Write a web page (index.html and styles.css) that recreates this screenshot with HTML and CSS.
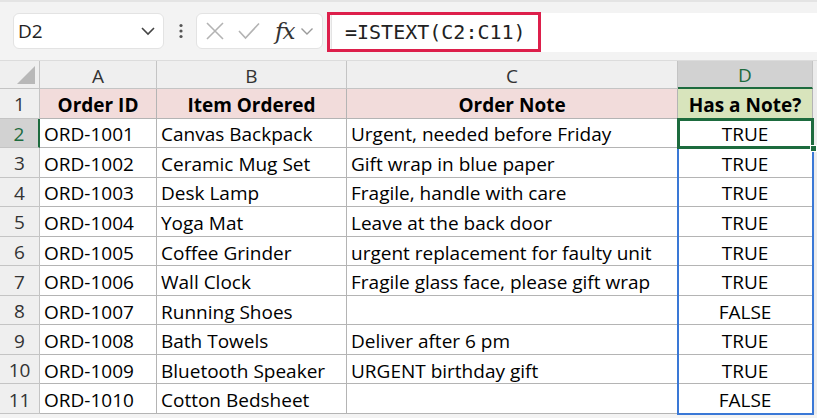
FILE: index.html
```html
<!DOCTYPE html>
<html lang="en">
<head>
    <meta charset="UTF-8">
    <title>ISTEXT - Orders</title>
    <link rel="stylesheet" href="styles.css">
</head>
<body>
    <div class="app">
        <div class="formula-bar">
            <div class="name-box">
                <span>D2</span>
                <svg class="chev" width="16" height="10" viewBox="0 0 16 10"><polyline points="2,2 8,8 14,2" fill="none" stroke="#444" stroke-width="1.6"/></svg>
            </div>
            <svg class="dots" width="6" height="16" viewBox="0 0 6 16"><circle cx="3" cy="2.5" r="1.6" fill="#555"/><circle cx="3" cy="8" r="1.6" fill="#555"/><circle cx="3" cy="13.5" r="1.6" fill="#555"/></svg>
            <div class="fn-box">
                <svg width="20" height="20" viewBox="0 0 20 20"><path d="M2 2 L18 18 M18 2 L2 18" stroke="#b3b3b3" stroke-width="1.6" fill="none"/></svg>
                <svg width="22" height="18" viewBox="0 0 22 18"><polyline points="1,9 7.5,16 21,1.5" stroke="#b3b3b3" stroke-width="1.6" fill="none"/></svg>
                <span class="fx">fx</span>
                <svg width="14" height="9" viewBox="0 0 14 9"><polyline points="1.5,1.5 7,7 12.5,1.5" fill="none" stroke="#9a9a9a" stroke-width="1.4"/></svg>
            </div>
            <div class="formula-input">
                <span class="formula">=ISTEXT(C2:C11)</span>
            </div>
        </div>

        <div class="sheet">
            <div class="corner"><svg width="18" height="18" viewBox="0 0 18 18"><polygon points="18,0 18,18 0,18" fill="#b8b8b8"/></svg></div>
            <div class="col-head">A</div>
            <div class="col-head">B</div>
            <div class="col-head">C</div>
            <div class="col-head active">D</div>
            <div class="col-head edge"></div>

            <div class="row-head">1</div>
            <div class="cell th pink">Order ID</div>
            <div class="cell th pink">Item Ordered</div>
            <div class="cell th pink">Order Note</div>
            <div class="cell th green">Has a Note?</div>
            <div class="edge"></div>

            <div class="row-head active">2</div>
            <div class="cell">ORD-1001</div>
            <div class="cell">Canvas Backpack</div>
            <div class="cell">Urgent, needed before Friday</div>
            <div class="cell mid">TRUE</div>
            <div class="edge"></div>

            <div class="row-head">3</div>
            <div class="cell">ORD-1002</div>
            <div class="cell">Ceramic Mug Set</div>
            <div class="cell">Gift wrap in blue paper</div>
            <div class="cell mid">TRUE</div>
            <div class="edge"></div>

            <div class="row-head">4</div>
            <div class="cell">ORD-1003</div>
            <div class="cell">Desk Lamp</div>
            <div class="cell">Fragile, handle with care</div>
            <div class="cell mid">TRUE</div>
            <div class="edge"></div>

            <div class="row-head">5</div>
            <div class="cell">ORD-1004</div>
            <div class="cell">Yoga Mat</div>
            <div class="cell">Leave at the back door</div>
            <div class="cell mid">TRUE</div>
            <div class="edge"></div>

            <div class="row-head">6</div>
            <div class="cell">ORD-1005</div>
            <div class="cell">Coffee Grinder</div>
            <div class="cell">urgent replacement for faulty unit</div>
            <div class="cell mid">TRUE</div>
            <div class="edge"></div>

            <div class="row-head">7</div>
            <div class="cell">ORD-1006</div>
            <div class="cell">Wall Clock</div>
            <div class="cell">Fragile glass face, please gift wrap</div>
            <div class="cell mid">TRUE</div>
            <div class="edge"></div>

            <div class="row-head">8</div>
            <div class="cell">ORD-1007</div>
            <div class="cell">Running Shoes</div>
            <div class="cell"></div>
            <div class="cell mid">FALSE</div>
            <div class="edge"></div>

            <div class="row-head">9</div>
            <div class="cell">ORD-1008</div>
            <div class="cell">Bath Towels</div>
            <div class="cell">Deliver after 6 pm</div>
            <div class="cell mid">TRUE</div>
            <div class="edge"></div>

            <div class="row-head">10</div>
            <div class="cell">ORD-1009</div>
            <div class="cell">Bluetooth Speaker</div>
            <div class="cell">URGENT birthday gift</div>
            <div class="cell mid">TRUE</div>
            <div class="edge"></div>

            <div class="row-head">11</div>
            <div class="cell">ORD-1010</div>
            <div class="cell">Cotton Bedsheet</div>
            <div class="cell"></div>
            <div class="cell mid">FALSE</div>
            <div class="edge"></div>

            <!-- selected range D2:D11 and the active cell -->
            <div class="range"></div>
            <div class="active-cell"><span class="handle"></span></div>
        </div>
    </div>
</body>
</html>
```

FILE: styles.css
```css
* {
    margin: 0;
    padding: 0;
    box-sizing: border-box;
}

body {
    font-family: 'Open Sans', 'Noto Sans', sans-serif;
    background: #f3f3f3;
    color: #000;
    overflow: hidden;
}

.app {
    width: 817px;
    height: 418px;
}

/* top bar */

.formula-bar {
    height: 61px;
    display: flex;
    align-items: center;
    padding-left: 13px;
    background: #f3f3f3;
    border-top: 2px solid #e4e4e4;
    border-bottom: 1px solid #dcdcdc;
}

.name-box {
    width: 151px;
    height: 36px;
    background: #fff;
    border: 1px solid #e3e3e3;
    border-radius: 6px;
    display: flex;
    align-items: center;
    justify-content: space-between;
    padding: 0 7px 0 4px;
    font-size: 19px;
    color: #222;
}

.dots {
    margin: 0 12px 0 14px;
}

.fn-box {
    width: 127px;
    height: 36px;
    background: #fff;
    border: 1px solid #e3e3e3;
    border-radius: 6px;
    display: flex;
    align-items: center;
    padding: 0 5px 0 8px;
}

.fn-box svg:nth-child(2) {
    margin-left: 13px;
}

.fx {
    font-family: 'DejaVu Serif', 'Liberation Serif', serif;
    font-style: italic;
    font-size: 23px;
    color: #333;
    margin-left: 15px;
    margin-right: 6px;
    letter-spacing: -1px;
}

.formula-input {
    flex: 1;
    align-self: stretch;
    margin: 11px 0 8px 8px;
    background: #fff;
    border-left: 1px solid #e3e3e3;
    display: flex;
    align-items: center;
}

.formula {
    font-family: 'DejaVu Sans Mono', monospace;
    font-size: 20px;
    color: #222;
    border: 3px solid #dd1f4b;
    height: 40px;
    display: flex;
    align-items: center;
    padding: 0 12px 0 15px;
    margin-left: -5px;
    margin-top: -1px;
}

/* worksheet */

.sheet {
    position: relative;
    display: grid;
    grid-template-columns: 40px 117px 190px 331px 135px 1fr;
    grid-template-rows: 28px repeat(11, 29.55px);
    background: #fff;
    font-size: 19px;
}

.corner,
.col-head,
.row-head {
    background: #efefef;
    color: #333;
    border-right: 1px solid #c4c4c4;
    border-bottom: 1px solid #c4c4c4;
    display: flex;
    align-items: center;
    justify-content: center;
    padding-top: 2px;
}

.corner {
    justify-content: flex-end;
    align-items: flex-end;
    padding: 0 4px 4px 0;
}

.col-head.active {
    background: #d2d2d2;
    color: #1d6b3e;
    border-bottom: 2px solid #1d6b3e;
}

.row-head.active {
    background: #d2d2d2;
    color: #1d6b3e;
    border-right: 2px solid #1d6b3e;
}

.edge {
    background: #ececec;
    border: none;
}

.cell {
    border-right: 1px solid #b4b4b4;
    border-bottom: 1px solid #b4b4b4;
    display: flex;
    align-items: center;
    padding: 3px 0 0 4px;
    white-space: nowrap;
    overflow: hidden;
}

.cell.th {
    font-weight: 700;
    justify-content: center;
    padding-left: 0;
}

.pink {
    background: #f2dcdb;
}

.green {
    background: #d8e4bc;
}

.mid {
    justify-content: center;
    padding-left: 0;
}

.range {
    position: absolute;
    left: 677px;
    top: 57px;
    width: 137px;
    height: 297px;
    border: 2px solid #3a78d6;
    pointer-events: none;
}

.active-cell {
    position: absolute;
    left: 677px;
    top: 57px;
    width: 137px;
    height: 31px;
    border: 3px solid #1d6b3e;
    pointer-events: none;
}

.handle {
    position: absolute;
    right: -6px;
    bottom: -6px;
    width: 7px;
    height: 7px;
    background: #1d6b3e;
    border: 1px solid #fff;
}
```
